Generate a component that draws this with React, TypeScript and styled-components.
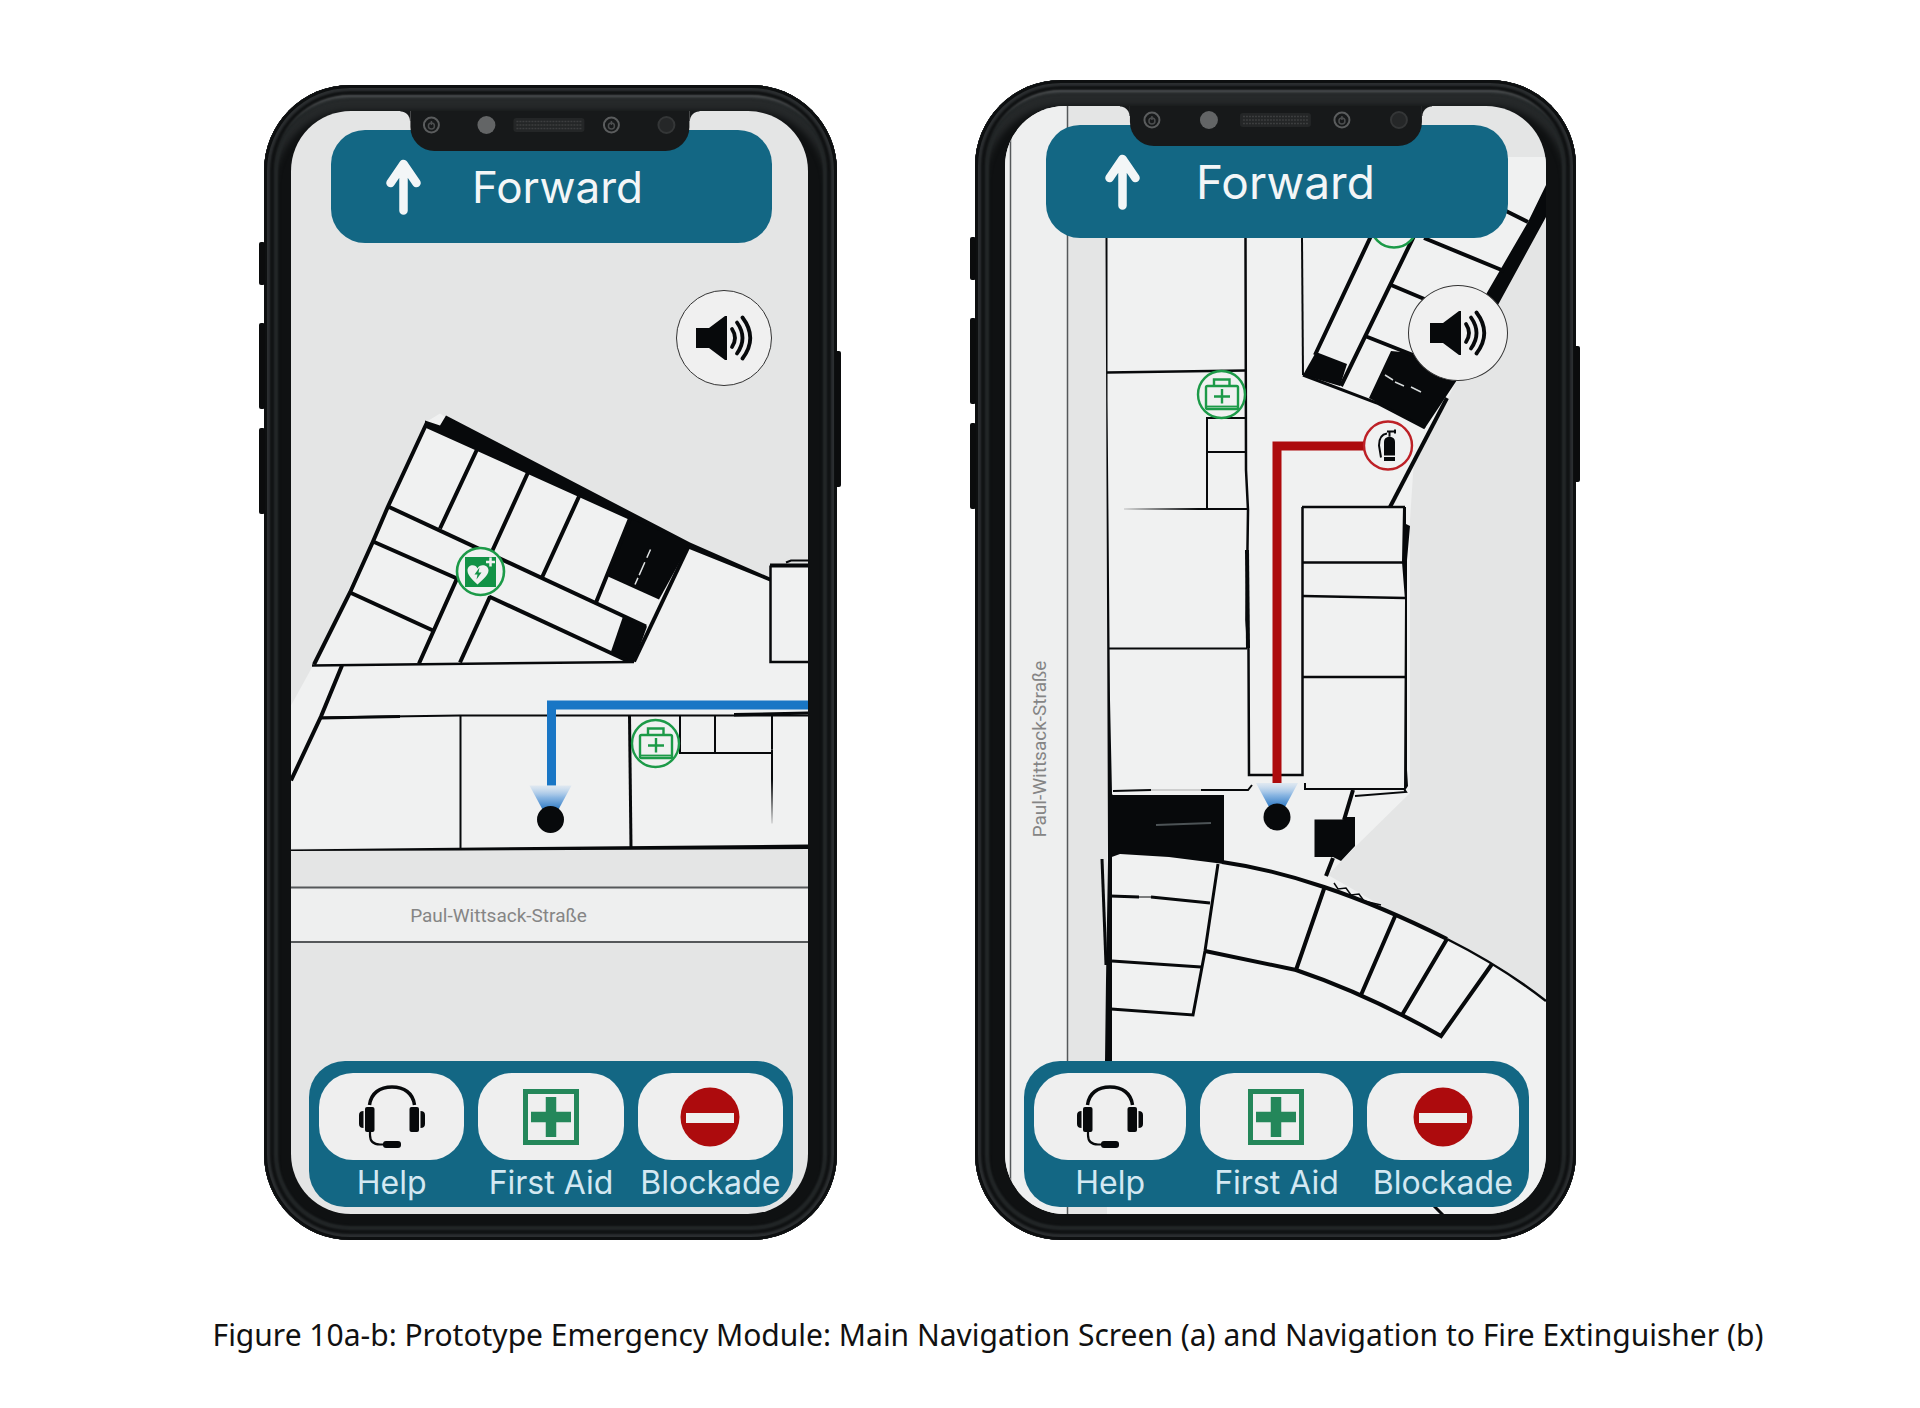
import React from "react";
import styled, { createGlobalStyle } from "styled-components";

const GlobalStyle = createGlobalStyle`
  *, *::before, *::after { box-sizing: border-box; }
  body {
    margin: 0;
    background: #fff;
    color: #111;
    font-family: Inter, Lato, "Liberation Sans", sans-serif;
  }
`;

const TEAL = "#136784";
const INK = "#07090b";
const GREEN = "#1c9a48";
const SIGN_GREEN = "#24875a";
const RED = "#ad0b0d";
const BLUE = "#1976c5";
const FLOOR = "#f0f1f1";

/* ---------- page ---------- */

const Figure = styled.figure`
  margin: 0;
  padding: 80px 24px 48px;
  display: flex;
  flex-direction: column;
  gap: 71px;
`;

const Phones = styled.div`
  display: flex;
  justify-content: center;
  align-items: flex-end;
  gap: 138px;
  padding-right: 80px;
`;

const Caption = styled.figcaption`
  padding-left: 56px;
  text-align: center;
  font-family: "Noto Sans", "Open Sans", sans-serif;
  font-size: 30px;
  line-height: 48px;
`;

/* ---------- device ---------- */

const Frame = styled.section<{ $wide?: boolean }>`
  position: relative;
  display: flex;
  flex: 0 1 ${(p) => (p.$wide ? 601 : 573)}px;
  min-width: 0;
  aspect-ratio: ${(p) => (p.$wide ? "601 / 1160" : "573 / 1155")};
  padding: ${(p) => (p.$wide ? "26px 30px" : "26px 29px 26px 27px")};
  border-radius: 86px;
  background: #0f1112;
  box-shadow:
    inset 0 0 0 3px #0d0f10,
    inset 0 0 2px 6px #2b2e30,
    inset 0 0 2px 10px #101213,
    inset 0 8px 3px 4px #55585a,
    inset 0 0 2px 14px #232728,
    inset 0 16px 6px 10px #26292a;
`;

const SideKey = styled.span<{ $top: number; $height: number; $right?: boolean }>`
  position: absolute;
  top: ${(p) => p.$top}px;
  ${(p) => (p.$right ? "right: -4px;" : "left: -5px;")}
  width: 6px;
  height: ${(p) => p.$height}px;
  border-radius: 2px;
  background: #0b0c0d;
`;

const Screen = styled.div`
  position: relative;
  flex: 1;
  min-width: 0;
  display: flex;
  flex-direction: column;
  overflow: hidden;
  border-radius: 60px;
  background: #e4e5e5;
`;

const MapCanvas = styled.svg`
  position: absolute;
  inset: 0;
  width: 100%;
  height: 100%;
`;

const Notch = styled.div`
  position: absolute;
  z-index: 2;
  top: 0;
  left: 50%;
  transform: translateX(-50%);
  display: flex;
  justify-content: center;
  width: 54%;
  height: 40px;
  border-radius: 0 0 24px 24px;
  background: #17191a;

  &::before, &::after {
    content: "";
    position: absolute;
    top: 0;
    width: 10px;
    height: 10px;
  }
  &::before {
    right: 100%;
    background: radial-gradient(circle at 0 100%, transparent 9px, #17191a 10px);
  }
  &::after {
    left: 100%;
    background: radial-gradient(circle at 100% 100%, transparent 9px, #17191a 10px);
  }
`;

const Direction = styled.header<{ $wide?: boolean }>`
  position: relative;
  display: flex;
  align-items: center;
  gap: ${(p) => (p.$wide ? 56 : 51)}px;
  margin: 19px ${(p) => (p.$wide ? 38 : 36)}px 0 ${(p) => (p.$wide ? 41 : 40)}px;
  height: 113px;
  padding-left: ${(p) => (p.$wide ? 59 : 55)}px;
  border-radius: 34px;
  background: ${TEAL};
  color: #f3f6f7;
`;

const DirectionText = styled.h2<{ $wide?: boolean }>`
  margin: 0;
  font-size: ${(p) => (p.$wide ? 46 : 44)}px;
  line-height: 56px;
  font-weight: 400;
`;

const SoundButton = styled.button<{ $wide?: boolean }>`
  position: relative;
  align-self: flex-end;
  display: grid;
  place-items: center;
  width: ${(p) => (p.$wide ? 100 : 96)}px;
  height: 96px;
  margin: 47px ${(p) => (p.$wide ? 38 : 36)}px 0 0;
  padding: 0;
  border: 1px solid #333;
  border-radius: 50%;
  background: #f0f0f0;
  cursor: pointer;
`;

const ActionBar = styled.nav<{ $wide?: boolean }>`
  position: relative;
  display: grid;
  grid-template-columns: repeat(3, 1fr);
  gap: 14px;
  margin: auto ${(p) => (p.$wide ? 17 : 15)}px 7px ${(p) => (p.$wide ? 19 : 18)}px;
  height: 146px;
  padding: 12px 10px 0;
  border-radius: 36px;
  background: ${TEAL};
`;

const Action = styled.button`
  display: flex;
  flex-direction: column;
  align-items: center;
  min-width: 0;
  padding: 0;
  border: 0;
  background: none;
  color: #d3e8f2;
  font: inherit;
  font-size: 32px;
  line-height: 46px;
  white-space: nowrap;
  cursor: pointer;
`;

const ActionPill = styled.span`
  display: grid;
  place-items: center;
  align-self: stretch;
  height: 87px;
  border-radius: 34px;
  background: #efefef;
`;

/* ---------- icons ---------- */

const Sensors = ({ wide }: { wide?: boolean }) => {
  const spread = wide ? 123 : 117;
  const inner = wide ? 66 : 62;
  return (
    <svg width="272" height="28" viewBox="-136 0 272 28" aria-hidden="true">
      <g fill="none" stroke="#5a5c5d" strokeWidth="2">
        <circle cx={-spread - 1} cy="14" r="7.5" />
        <circle cx={inner} cy="14" r="7.5" />
        <circle cx={spread} cy="14" r="8" fill="#252728" stroke="#343637" />
      </g>
      <g fill="none" stroke="#4b4d4e" strokeWidth="1.5">
        <circle cx={-spread - 1} cy="15" r="3" />
        <circle cx={inner} cy="15" r="3" />
        <path d={`M${-spread - 1} 10v4M${inner} 10v4`} />
      </g>
      <circle cx={-inner - 1} cy="14" r="9" fill="#636566" />
      <rect x="-36" y="7" width="71" height="14" rx="3" fill="#242627" />
      <path d="M-33 10.500h65M-33 14h65M-33 17.500h65" stroke="#3c3e3f" strokeWidth="1.500" strokeDasharray="2 1" />
    </svg>
  );
};

const ArrowUp = () => (
  <svg width="35" height="56" viewBox="0 0 35 56" aria-hidden="true">
    <path
      d="M17.500 51.500V6M4.500 24L17.500 5L30.500 24"
      fill="none"
      stroke="#f3f6f7"
      strokeWidth="8.500"
      strokeLinecap="round"
      strokeLinejoin="round"
    />
  </svg>
);

const SpeakerIcon = () => (
  <svg width="58" height="46" viewBox="0 0 58 46" aria-hidden="true">
    <path d="M1 13H14L30 1H32V45H30L14 33H1Z" fill={INK} />
    <g fill="none" stroke={INK} strokeWidth="3.800" strokeLinecap="round">
      <path d="M37 14Q43 23 37 32" />
      <path d="M42 7.500Q53 23 42 38.500" />
      <path d="M47.500 2.500Q63 23 47.500 43.500" />
    </g>
  </svg>
);

const HeadsetIcon = () => (
  <svg width="66" height="64" viewBox="0 0 66 64" aria-hidden="true">
    <g fill={INK}>
      <rect x="6" y="22" width="9.500" height="25" rx="2" />
      <rect x="50.500" y="22" width="9.500" height="25" rx="2" />
      <path d="M4.500 26V43Q0 43 0 39V30Q0 26 4.500 26ZM61.500 26V43Q66 43 66 39V30Q66 26 61.500 26Z" />
      <rect x="24" y="56" width="18" height="7" rx="3" />
    </g>
    <path d="M10.500 20C12 8 21 2 33 2S54 8 55.500 20" fill="none" stroke={INK} strokeWidth="3.500" />
    <path d="M11 44V50Q11 59.500 21 59.500H26" fill="none" stroke={INK} strokeWidth="2.200" />
  </svg>
);

const FirstAidIcon = () => (
  <svg width="58" height="58" viewBox="0 0 58 58" aria-hidden="true">
    <rect x="3.500" y="3.500" width="51" height="51" fill="none" stroke={SIGN_GREEN} strokeWidth="5" />
    <path d="M29 9V49M9 29H49" stroke={SIGN_GREEN} strokeWidth="10.500" />
  </svg>
);

const BlockadeIcon = () => (
  <svg width="60" height="60" viewBox="0 0 60 60" aria-hidden="true">
    <circle cx="30" cy="30" r="29.500" fill={RED} />
    <rect x="6" y="26" width="48" height="10" fill="#efefef" />
  </svg>
);

/* ---------- map markers ---------- */

const KitMarker = ({ x, y }: { x: number; y: number }) => (
  <g transform={`translate(${x} ${y})`} fill="none" stroke={GREEN} strokeWidth="2.400">
    <circle r="23.500" fill={FLOOR} />
    <rect x="-15.500" y="-8.500" width="32" height="23" rx="1.500" />
    <path d="M-15.500 12H16.500" strokeWidth="1.800" />
    <path d="M-7.500 -9V-15H8V-9" />
    <path d="M0.500 -5.500V9M-7.500 2H8.500" />
  </g>
);

const AedMarker = ({ x, y }: { x: number; y: number }) => (
  <g transform={`translate(${x} ${y})`}>
    <circle r="23.500" fill={FLOOR} stroke={GREEN} strokeWidth="2.600" />
    <rect x="-15.500" y="-14.500" width="31" height="30" fill="#129246" />
    <path
      d="M-3 13C-8 8 -13 4 -13 -1C-13 -7 -5 -8 -3 -3C-1 -8 8 -7 8 -1C8 4 2 8 -3 13Z"
      fill={FLOOR}
    />
    <path d="M-1 -4L-6 3H-3L-4 8L1 1H-2Z" fill="#129246" />
    <path d="M10 -14V-5M5.500 -9.500H14.500" stroke={FLOOR} strokeWidth="2.500" />
  </g>
);

const ExtinguisherMarker = ({ x, y }: { x: number; y: number }) => (
  <g transform={`translate(${x} ${y})`}>
    <circle r="24" fill={FLOOR} stroke="#bd2026" strokeWidth="2.400" />
    <path d="M-4 10V-4Q-4 -8 1.500 -9Q7 -8 7 -4V10Z" fill={INK} />
    <rect x="-4" y="11.500" width="11" height="4" fill={INK} />
    <path d="M1.500 -9V-13M-1 -14H7M7 -16V-12M-1 -12C-8 -11 -9 -5 -9 0L-7 12" fill="none" stroke={INK} strokeWidth="2" />
  </g>
);

const Position = ({ x, y, id }: { x: number; y: number; id: string }) => (
  <g transform={`translate(${x} ${y})`}>
    <defs>
      <linearGradient id={id} x1="0" y1="0" x2="0" y2="1">
        <stop offset="0" stopColor="#b9d3ee" stopOpacity="0.300" />
        <stop offset="0.500" stopColor="#8ab6e2" />
        <stop offset="1" stopColor="#2f7ac4" />
      </linearGradient>
    </defs>
    <path d="M-21 -34H21L8 -10H-8Z" fill={`url(#${id})`} />
    <circle r="13.500" fill={INK} />
  </g>
);

const StreetName = styled.text`
  fill: #858585;
  font-family: Roboto, "Liberation Sans", sans-serif;
  font-size: 19px;
  text-anchor: middle;
`;

/* ---------- maps ---------- */

const MainMap = () => (
  <MapCanvas viewBox="291 111 517 1104" preserveAspectRatio="xMidYMid slice" role="img" aria-label="Floor plan">
    <defs>
      <linearGradient id="fadeDown" x1="0" y1="0" x2="0" y2="1">
        <stop offset="0.400" stopColor={INK} />
        <stop offset="1" stopColor={INK} stopOpacity="0.100" />
      </linearGradient>
    </defs>
    <path d="M427 422L440 414L446 418L690 546L770 581V565H808V849H291V706L313 666Z" fill={FLOOR} />
    <path d="M291 888H808V942H291Z" fill="#eeefef" />

    <g fill={INK}>
      <path d="M425 421L440 426L446 416L690 543L770 578V582L688 549L631 521L425 428Z" />
      <path d="M630 519L690 544L659 600L608 577Z" />
      <path d="M623 617L647 627L634 663L624 661L611 652Z" />
      <path d="M734 713.500L808 712V715L734 717Z" />
      <path d="M291 850L430 848.500L808 845V849.500L460 851L291 851.500Z" />
    </g>
    <g fill="none" stroke={INK} strokeWidth="4">
      <path d="M427 423L388 507L373 542L350 593L314 665" />
      <path d="M388 507L646 627" />
      <path d="M373 542L457 579L419 664" />
      <path d="M489 597L627 661" />
      <path d="M490 597L460 663" />
      <path d="M350 593L433 631" />
      <path d="M477 450L440 529M528 473L492 552M579 497L542 578M630 519L596 603" />
      <path d="M689 546L634 662" />
      <path d="M342 666L321 717L291 781" />
    </g>
    <g fill="none" stroke={INK} strokeWidth="2">
      <path d="M312 666L634 662.500" strokeWidth="2.500" />
      <path d="M321 718.500L400 717" strokeWidth="3" />
      <path d="M321 718L460 716H808" />
      <path d="M460.500 716V850" />
      <path d="M629.500 716L631 848" strokeWidth="3" />
      <path d="M680 716V753.500H772M715 716V753" />
      <path d="M772 715V750" />
      <path d="M808 662.500H770.500V566" strokeWidth="2.500" />
      <path d="M770 566H808" strokeWidth="4" />
      <path d="M786 563L791 561H808" />
    </g>
    <rect x="771" y="750" width="2" height="74" fill="url(#fadeDown)" />
    <path d="M650.500 550L635 585" stroke="#dfe2e3" strokeWidth="1.500" strokeDasharray="9 5 14 3" />
    <path d="M291 888H808M291 942.500H808" stroke="#55585a" strokeWidth="2" />

    <path d="M808 705.500H551.500V786" fill="none" stroke={BLUE} strokeWidth="9" />
    <Position x={550.5} y={820} id="coneMain" />
    <AedMarker x={480.5} y={572} />
    <KitMarker x={655.5} y={744} />
    <StreetName x="498.500" y="922">Paul-Wittsack-Straße</StreetName>
  </MapCanvas>
);

const ExtinguisherMap = () => (
  <MapCanvas viewBox="1004 106 541 1108" preserveAspectRatio="xMidYMid slice" role="img" aria-label="Floor plan">
    <defs>
      <linearGradient id="fadeLeft" x1="0" y1="0" x2="1" y2="0">
        <stop offset="0" stopColor={INK} stopOpacity="0.100" />
        <stop offset="0.600" stopColor={INK} />
      </linearGradient>
    </defs>
    <path d="M1004 106H1066V1214H1004Z" fill="#eeefef" />
    <path
      d="M1106 238H1300V157H1545V200L1446 400L1413 460L1409 520V793L1354 847L1327 875L1395 914L1490 963L1545 1001V1214H1106Z"
      fill={FLOOR}
    />
    <path d="M1009.500 106V1214M1066.500 106V1214" stroke="#55585a" strokeWidth="1.500" />

    <g fill={INK}>
      <path d="M1545 185V217L1456 380L1424 428L1368 398L1390 351L1411 353L1440 372L1527 222Z" />
      <path d="M1315 352L1346 364L1339 386L1302 375Z" />
      <path d="M1108 792L1112 795H1223V864L1168 857L1119 854L1108 858Z" />
      <path d="M1313.500 819.500H1343L1345 817H1354V846L1340 861L1332 857H1313.500Z" />
      <path d="M1104.500 238H1106.500V400L1109 700L1111 793V1062H1104L1105 980L1107 860L1106 600Z" />
      <path d="M1402 507H1405V524L1409 526L1406 560V770L1407 786L1403 792L1404 600L1401 562Z" />
    </g>
    <g fill={FLOOR}>
      <path d="M1364 338L1389 351L1367 398L1341 386Z" />
      <path d="M1392 287L1430 303L1412 352L1366 335Z" />
    </g>

    <g fill="none" stroke={INK} strokeWidth="4">
      <path d="M1370 236L1314 355M1413 236L1340 386" />
      <path d="M1423 238L1503 271M1390 285L1440 306M1364 336L1412 355M1505 211L1527 222" />
      <path d="M1302 375L1376 403L1424 428" strokeWidth="3" />
      <path d="M1446 398L1389 507" />
      <path d="M1352 790L1343 820M1332 858L1325 876M1324 886L1295 970" />
      <path d="M1221 862Q1270 869 1323 887Q1380 906 1446 939" />
      <path d="M1446 939Q1500 966 1545 1001" strokeWidth="2.500" />
      <path d="M1204 951L1295 970Q1366 994 1440 1036L1491 964" />
      <path d="M1395 914L1360 995M1446 939L1401 1015" />
    </g>
    <g fill="none" stroke={INK} strokeWidth="2">
      <path d="M1244.500 238L1245 470L1247 510L1245.500 620L1247.500 650L1248 775H1301.500V507" strokeWidth="2.500" />
      <path d="M1246 550L1247 648" strokeWidth="4" />
      <path d="M1301 238L1302 375" />
      <path d="M1106 372.500L1244 370.500" strokeWidth="2.500" />
      <path d="M1206 508V418H1244M1206 452H1244" />
      <path d="M1108 648.500H1246" />
      <path d="M1112 791L1150 790M1200 790H1247L1251 785" />
      <path d="M1301 507H1404M1302 562.500H1402M1302 596L1404 598M1302 677H1404" strokeWidth="2.500" />
      <path d="M1304 783V789H1403L1405 792L1354 796" />
      <path d="M1101 859L1105 965" strokeWidth="3" />
      <path d="M1217 864L1204 951L1192 1015L1110 1009" strokeWidth="3" />
      <path d="M1109 896L1138 897M1150 897L1209 903M1111 961L1200 967" strokeWidth="3" />
      <path d="M1138 897H1150" strokeWidth="1" />
      <path d="M1333 883L1337 889L1345 888L1350 895L1358 894L1363 901L1380 905" strokeWidth="1.500" />
      <path d="M1433 1206L1442 1215" strokeWidth="3" />
    </g>
    <path d="M1123 508H1247V510H1123Z" fill="url(#fadeLeft)" />
    <path d="M1150 790H1200" stroke="#aaa" strokeWidth="1" />
    <path d="M1155 825L1210 823" stroke="#4c5356" strokeWidth="2" />
    <path d="M1384 375L1392 380M1394 382L1403 386M1410 387L1420 392" stroke="#d6dadb" strokeWidth="1.500" />

    <path d="M1364 446H1276V783" fill="none" stroke={RED} strokeWidth="9" />
    <Position x={1276} y={817} id="coneExtinguisher" />
    <circle cx="1393" cy="224" r="23.500" fill={FLOOR} stroke={GREEN} strokeWidth="2.600" />
    <KitMarker x={1220.5} y={394.5} />
    <ExtinguisherMarker x={1387} y={445.5} />
    <StreetName transform="translate(1045 749) rotate(-90)">Paul-Wittsack-Straße</StreetName>
  </MapCanvas>
);

/* ---------- phone ---------- */

const actions = [
  { label: "Help", Icon: HeadsetIcon },
  { label: "First Aid", Icon: FirstAidIcon },
  { label: "Blockade", Icon: BlockadeIcon },
];

const Phone = ({ wide, label, children }: { wide?: boolean; label: string; children: React.ReactNode }) => (
  <Frame $wide={wide} aria-label={label}>
    <SideKey $top={157} $height={43} />
    <SideKey $top={238} $height={86} />
    <SideKey $top={343} $height={86} />
    <SideKey $top={266} $height={136} $right />
    <Screen>
      {children}
      <Notch>
        <Sensors wide={wide} />
      </Notch>
      <Direction $wide={wide}>
        <ArrowUp />
        <DirectionText $wide={wide}>Forward</DirectionText>
      </Direction>
      <SoundButton $wide={wide} type="button" aria-label="Sound">
        <SpeakerIcon />
      </SoundButton>
      <ActionBar $wide={wide}>
        {actions.map(({ label: name, Icon }) => (
          <Action key={name} type="button">
            <ActionPill>
              <Icon />
            </ActionPill>
            {name}
          </Action>
        ))}
      </ActionBar>
    </Screen>
  </Frame>
);

export default function App() {
  return (
    <>
      <GlobalStyle />
      <Figure>
        <Phones>
          <Phone label="Main navigation screen">
            <MainMap />
          </Phone>
          <Phone wide label="Navigation to fire extinguisher">
            <ExtinguisherMap />
          </Phone>
        </Phones>
        <Caption>
          Figure 10a-b: Prototype Emergency Module: Main Navigation Screen (a) and Navigation to Fire Extinguisher (b)
        </Caption>
      </Figure>
    </>
  );
}
